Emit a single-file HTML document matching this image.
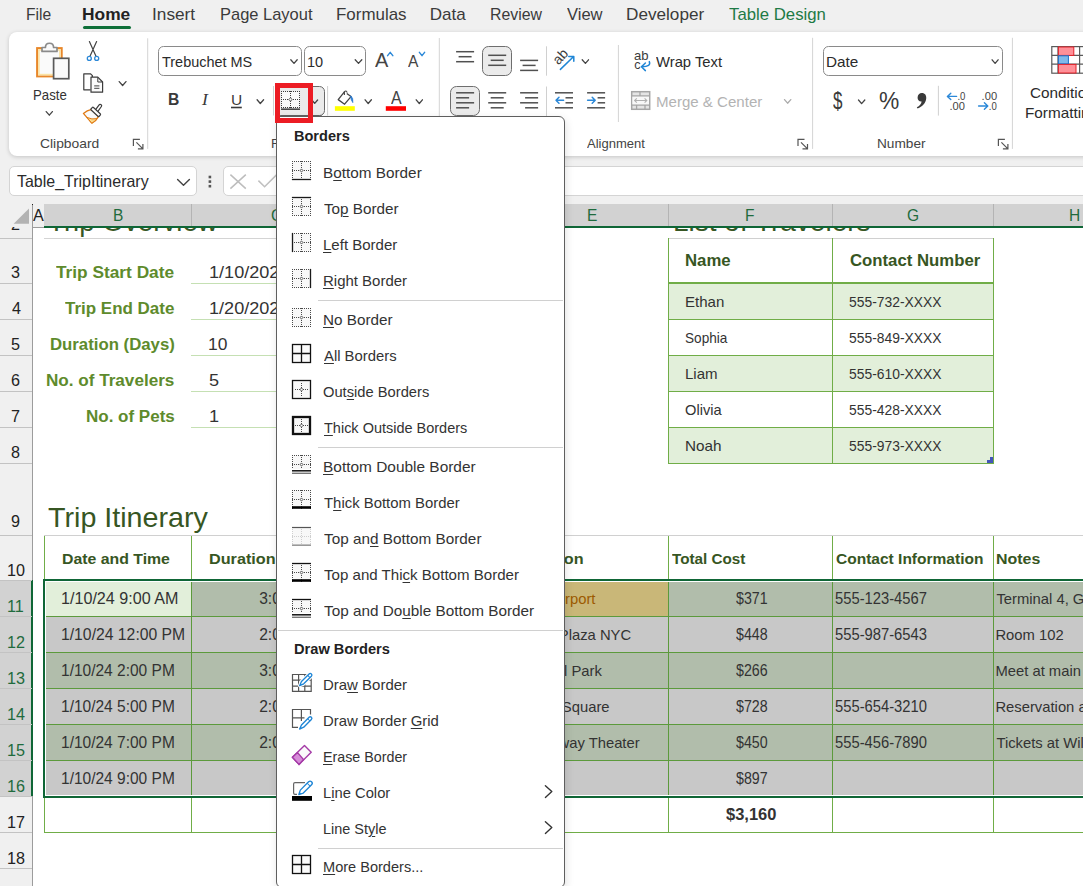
<!DOCTYPE html>
<html lang="en"><head><meta charset="utf-8"><title>Excel - Borders menu</title>
<style>
html,body{margin:0;padding:0}
body{width:1083px;height:886px;overflow:hidden;background:#f0f0f0;position:relative;font-family:"Liberation Sans",sans-serif}
#root{position:absolute;left:0;top:0;width:1083px;height:886px;overflow:hidden;background:#f0f0f0}
.t{position:absolute;white-space:pre;line-height:60px;height:60px;transform-origin:0 0;font-family:"Liberation Sans",sans-serif}
.t u{text-decoration-thickness:1px;text-underline-offset:2px}
.ov{position:absolute;left:0;top:0;overflow:visible;pointer-events:none}
.layer{position:absolute;left:0;top:0;width:1083px;height:886px}
</style></head><body><div id="root">
<!-- tabs + ribbon -->
<div class="layer">
<div style="position:absolute;left:83px;top:26px;width:48px;height:3px;border-radius:2px;background:#0f7039"></div>
<div style="position:absolute;left:9px;top:32px;width:1100px;height:124px;background:#fff;border-radius:8px;box-shadow:0 1px 4px rgba(0,0,0,.18)"></div>
<svg class="ov" width="1083" height="886" viewBox="0 0 1083 886"><path d="M147.7 38.3 V148.9" stroke="#d4d4d4" stroke-width="1"/><path d="M439.3 38 V148.9" stroke="#d4d4d4" stroke-width="1"/><path d="M618.4 45 V122" stroke="#d4d4d4" stroke-width="1"/><path d="M812.6 37.8 V148.9" stroke="#d4d4d4" stroke-width="1"/><path d="M1012.4 37.8 V148.9" stroke="#d4d4d4" stroke-width="1"/><path d="M273.5 86 V115.5" stroke="#d0d0d0" stroke-width="1"/><path d="M327.6 86 V115.5" stroke="#d0d0d0" stroke-width="1"/><path d="M546.5 46.3 V75.7" stroke="#d0d0d0" stroke-width="1"/><path d="M546.5 86.5 V116" stroke="#d0d0d0" stroke-width="1"/><path d="M938.4 85.8 V115.6" stroke="#d0d0d0" stroke-width="1"/><rect x="37.1" y="48.1" width="24.6" height="28.3" fill="#fafafa" stroke="#e8872a" stroke-width="2"/><rect x="38.9" y="49.9" width="21" height="24.7" fill="#fafafa" stroke="#fbe3a4" stroke-width="1.6"/><path d="M42 51.4 V47.5 H45.4 C45.4 41.8 53.6 41.8 53.6 47.5 H57 V51.4 Z" fill="#fafafa" stroke="#8a8a8a" stroke-width="1.7" stroke-linejoin="round"/><rect x="53.6" y="58.3" width="15.2" height="20.4" fill="#fafafa" stroke="#595959" stroke-width="1.7"/><path d="M46.2 111.6 L49.3 115.2 L52.4 111.6" fill="none" stroke="#444" stroke-width="1.3" stroke-linecap="round" stroke-linejoin="round"/><path d="M89.4 41.6 L96 56.2 M96.6 41.6 L90 56.2" stroke="#444" stroke-width="1.2" fill="none" stroke-linecap="round"/><circle cx="89.3" cy="58.4" r="2" fill="#fff" stroke="#2b88d8" stroke-width="1.3"/><circle cx="96.7" cy="58.4" r="2" fill="#fff" stroke="#2b88d8" stroke-width="1.3"/><path d="M90.6 89.8 H83.8 V73.8 H90.6 L92.4 75.6 V77" fill="none" stroke="#3c3c3c" stroke-width="1.2" stroke-linejoin="round"/><path d="M91 77.2 H97.8 L102.6 82 V92.2 H91 Z" fill="#fafafa" stroke="#3c3c3c" stroke-width="1.2" stroke-linejoin="round"/><path d="M97.8 77.4 V82 H102.4" fill="none" stroke="#3c3c3c" stroke-width="1"/><path d="M94.2 85.9 H99.4 M94.2 88.4 H99.4" stroke="#666" stroke-width="1.1"/><path d="M119.2 81.6 L122.6 85.5 L126.0 81.6" fill="none" stroke="#444" stroke-width="1.3" stroke-linecap="round" stroke-linejoin="round"/><path d="M91.6 109.4 Q87 110.4 83.4 113.4 L91.8 123.2 Q96.2 121 98.4 116.6 Z" fill="#fafafa" stroke="#e07b16" stroke-width="1.3" stroke-linejoin="round"/><path d="M86.8 117.4 L91.8 123.2 Q95.2 121.4 97 118.6 Q92 119.8 86.8 117.4 Z" fill="#fbd98a" stroke="#e07b16" stroke-width="1" stroke-linejoin="round"/><rect x="-4.2" y="-1.4" width="8.4" height="2.8" rx="1.2" transform="translate(98.5 108.1) rotate(-54)" fill="#fff" stroke="#3c3c3c" stroke-width="1.2"/><rect x="-5.5" y="-1.7" width="11" height="3.4" rx="0.9" transform="translate(95.7 111.9) rotate(43)" fill="#fff" stroke="#3c3c3c" stroke-width="1.2"/><path d="M133.4 145.9 V139.4 H139.9" fill="none" stroke="#555" stroke-width="1.2"/><path d="M136.4 142.4 L142.70000000000002 148.70000000000002 M142.9 143.9 V148.9 H137.9" fill="none" stroke="#555" stroke-width="1.2"/><rect x="158.5" y="46.5" width="143" height="29" rx="5" fill="#fff" stroke="#8a8a8a" stroke-width="1"/><path d="M290.8 59.8 L294.0 63.4 L297.2 59.8" fill="none" stroke="#444" stroke-width="1.3" stroke-linecap="round" stroke-linejoin="round"/><rect x="304.5" y="46.5" width="61" height="29" rx="5" fill="#fff" stroke="#8a8a8a" stroke-width="1"/><path d="M355.2 59.8 L358.5 63.4 L361.8 59.8" fill="none" stroke="#444" stroke-width="1.3" stroke-linecap="round" stroke-linejoin="round"/><path d="M387.6 55.6 L390.2 52.4 L392.8 55.6" fill="none" stroke="#2b88d8" stroke-width="1.5" stroke-linecap="round" stroke-linejoin="round"/><path d="M419.4 52.4 L422.0 55.6 L424.6 52.4" fill="none" stroke="#2b88d8" stroke-width="1.5" stroke-linecap="round" stroke-linejoin="round"/><path d="M231 107.5 H241.8" stroke="#3a3a3a" stroke-width="1.6"/><path d="M257.1 99.8 L260.3 103.5 L263.6 99.8" fill="none" stroke="#444" stroke-width="1.3" stroke-linecap="round" stroke-linejoin="round"/><rect x="275.5" y="86.5" width="49" height="29" rx="5" fill="#ebebeb" stroke="#6a6a6a" stroke-width="1"/><path d="M276 116.3 H322" stroke="#5a5a5a" stroke-width="1.6"/><rect x="281.5" y="91.5" width="18" height="16" fill="#f9f9f9"/><path d="M281 91.5 H300 M281 99.5 H300 M281 107.5 H300" stroke="#3c3c3c" stroke-width="1" stroke-dasharray="1 1" fill="none" shape-rendering="crispEdges"/><path d="M281.5 91 V108 M290.5 91 V108 M299.5 91 V108" stroke="#3c3c3c" stroke-width="1" stroke-dasharray="1 1" fill="none" shape-rendering="crispEdges"/><rect x="289.3" y="98.3" width="2.4" height="2.4" fill="#fff" stroke="#3c3c3c" stroke-width="0.8" transform="rotate(45 290.5 99.5)"/><path d="M281 109.2 H300" stroke="#4a4a4a" stroke-width="1.6"/><path d="M311.8 100.0 L314.7 103.4 L317.6 100.0" fill="none" stroke="#444" stroke-width="1.3" stroke-linecap="round" stroke-linejoin="round"/><path d="M344.6 91.6 L338.2 99.6 L344.6 104.2 L351 96.6 L346.8 93.4" fill="#fff" stroke="#444" stroke-width="1.3" stroke-linejoin="round"/><path d="M344.4 95 V91.8 Q346.2 89.8 347.2 92.6" fill="none" stroke="#444" stroke-width="1.1"/><path d="M350.6 95.8 Q353.6 98 352.8 102.6 Q350.8 100 350.6 95.8 Z" fill="#2b7cd3" stroke="#2b7cd3" stroke-width="0.8"/><rect x="334.9" y="106.2" width="19.9" height="4.6" fill="#ffff00"/><path d="M365.1 99.8 L368.2 103.5 L371.4 99.8" fill="none" stroke="#444" stroke-width="1.3" stroke-linecap="round" stroke-linejoin="round"/><rect x="385.8" y="106.2" width="20.2" height="4.6" fill="#ff0000"/><path d="M416.2 99.8 L419.3 103.5 L422.4 99.8" fill="none" stroke="#444" stroke-width="1.3" stroke-linecap="round" stroke-linejoin="round"/><rect x="482.5" y="46.5" width="29" height="29" rx="6" fill="#ebebeb" stroke="#6e6e6e"/><rect x="450.5" y="86.5" width="29" height="29" rx="6" fill="#ebebeb" stroke="#6e6e6e"/><path d="M456.1 51.7 H474.1" stroke="#505050" stroke-width="1.5" fill="none"/><path d="M458.6 56.7 H471.6" stroke="#505050" stroke-width="1.5" fill="none"/><path d="M456.1 61.7 H474.1" stroke="#505050" stroke-width="1.5" fill="none"/><path d="M488.2 55.3 H506.2" stroke="#505050" stroke-width="1.5" fill="none"/><path d="M490.7 60.3 H503.7" stroke="#505050" stroke-width="1.5" fill="none"/><path d="M488.2 65.3 H506.2" stroke="#505050" stroke-width="1.5" fill="none"/><path d="M520.1 60.4 H538.1" stroke="#505050" stroke-width="1.5" fill="none"/><path d="M522.6 65.4 H535.6" stroke="#505050" stroke-width="1.5" fill="none"/><path d="M520.1 70.4 H538.1" stroke="#505050" stroke-width="1.5" fill="none"/><path d="M456.1 92.8 H474.1" stroke="#505050" stroke-width="1.5" fill="none"/><path d="M456.1 97.8 H469.1" stroke="#505050" stroke-width="1.5" fill="none"/><path d="M456.1 102.8 H474.1" stroke="#505050" stroke-width="1.5" fill="none"/><path d="M456.1 107.8 H469.1" stroke="#505050" stroke-width="1.5" fill="none"/><path d="M488.2 92.8 H506.2" stroke="#505050" stroke-width="1.5" fill="none"/><path d="M490.7 97.8 H503.7" stroke="#505050" stroke-width="1.5" fill="none"/><path d="M488.2 102.8 H506.2" stroke="#505050" stroke-width="1.5" fill="none"/><path d="M490.7 107.8 H503.7" stroke="#505050" stroke-width="1.5" fill="none"/><path d="M520.1 92.8 H538.1" stroke="#505050" stroke-width="1.5" fill="none"/><path d="M525.1 97.8 H538.1" stroke="#505050" stroke-width="1.5" fill="none"/><path d="M520.1 102.8 H538.1" stroke="#505050" stroke-width="1.5" fill="none"/><path d="M525.1 107.8 H538.1" stroke="#505050" stroke-width="1.5" fill="none"/><path d="M555.0 92.8 H573.0" stroke="#505050" stroke-width="1.5" fill="none"/><path d="M565.5 97.8 H573.0" stroke="#505050" stroke-width="1.5" fill="none"/><path d="M565.5 102.8 H573.0" stroke="#505050" stroke-width="1.5" fill="none"/><path d="M555.0 107.8 H573.0" stroke="#505050" stroke-width="1.5" fill="none"/><path d="M587.1 92.8 H605.1" stroke="#505050" stroke-width="1.5" fill="none"/><path d="M597.6 97.8 H605.1" stroke="#505050" stroke-width="1.5" fill="none"/><path d="M597.6 102.8 H605.1" stroke="#505050" stroke-width="1.5" fill="none"/><path d="M587.1 107.8 H605.1" stroke="#505050" stroke-width="1.5" fill="none"/><path d="M563.6 100.3 H556 M559 97.3 L556 100.3 L559 103.3" fill="none" stroke="#2b88d8" stroke-width="1.5" stroke-linecap="round" stroke-linejoin="round"/><path d="M587.6 100.3 H595.2 M592.2 97.3 L595.2 100.3 L592.2 103.3" fill="none" stroke="#2b88d8" stroke-width="1.5" stroke-linecap="round" stroke-linejoin="round"/><text x="0" y="0" transform="translate(558.4 65.4) rotate(-47)" font-family="Liberation Sans, sans-serif" font-size="14" fill="#3c3c3c">ab</text><path d="M560.4 69.4 L573.4 56.7 M568.8 56.4 H573.8 V61.2" fill="none" stroke="#1f86d6" stroke-width="1.5" stroke-linecap="round" stroke-linejoin="round"/><path d="M582.2 59.8 L585.4 63.4 L588.5 59.8" fill="none" stroke="#444" stroke-width="1.3" stroke-linecap="round" stroke-linejoin="round"/><text x="634" y="60.3" font-family="Liberation Sans, sans-serif" font-size="12.6" fill="#3c3c3c" textLength="14.6" lengthAdjust="spacingAndGlyphs">ab</text><text x="634.2" y="69.4" font-family="Liberation Sans, sans-serif" font-size="12.6" fill="#3c3c3c">c</text><path d="M649.3 61.6 Q651.4 66.6 642 66.8 M645.4 63 L641.4 66.8 L645.4 70.6" fill="none" stroke="#1f86d6" stroke-width="1.5" stroke-linecap="round" stroke-linejoin="round"/><rect x="631.7" y="91.7" width="18" height="17.6" fill="#e4e4e4" stroke="#a6a6a6" stroke-width="1.5"/><rect x="632.4" y="96.2" width="16.6" height="8.6" fill="#f8f8f8"/><path d="M631.7 95.8 H649.7 M631.7 105.2 H649.7 M640 91.7 V95.8 M636.6 105.2 V109.3 M645 105.2 V109.3" stroke="#a6a6a6" stroke-width="1.3" fill="none"/><path d="M634.6 100.5 H646.8 M636.8 98.3 L634.6 100.5 L636.8 102.7 M644.6 98.3 L646.8 100.5 L644.6 102.7" stroke="#b0b0b0" stroke-width="1.1" fill="none"/><path d="M784.5 99.6 L787.6 103.2 L790.8 99.6" fill="none" stroke="#aaa" stroke-width="1.3" stroke-linecap="round" stroke-linejoin="round"/><path d="M798 145.9 V139.4 H804.5" fill="none" stroke="#555" stroke-width="1.2"/><path d="M801 142.4 L807.3 148.70000000000002 M807.5 143.9 V148.9 H802.5" fill="none" stroke="#555" stroke-width="1.2"/><rect x="823.5" y="46.5" width="179" height="29" rx="5" fill="#fff" stroke="#8a8a8a" stroke-width="1"/><path d="M992.1 59.8 L995.1 63.4 L998.1 59.8" fill="none" stroke="#444" stroke-width="1.3" stroke-linecap="round" stroke-linejoin="round"/><path d="M858.5 100.0 L861.6 103.6 L864.8 100.0" fill="none" stroke="#444" stroke-width="1.3" stroke-linecap="round" stroke-linejoin="round"/><path d="M921.8 93 C925 93 926.6 95.4 926.2 98.8 C925.8 103 922.4 106.8 917.6 108.6 L916.8 107.2 C919.6 105.8 921.4 103.8 921.6 101.4 C919 101.6 917.4 99.8 917.6 97.2 C917.8 94.8 919.4 93 921.8 93 Z" fill="#3a3a3a"/><text x="957.4" y="99.8" font-family="Liberation Sans, sans-serif" font-size="10.5" fill="#444" textLength="8" lengthAdjust="spacingAndGlyphs">.0</text><text x="949.4" y="109.6" font-family="Liberation Sans, sans-serif" font-size="10.5" fill="#444" textLength="15.5" lengthAdjust="spacingAndGlyphs">.00</text><path d="M956.6 96.4 H947.6 M950.8 93.2 L947.4 96.4 L950.8 99.6" fill="none" stroke="#2b88d8" stroke-width="1.4" stroke-linecap="round" stroke-linejoin="round"/><text x="981.6" y="99.8" font-family="Liberation Sans, sans-serif" font-size="10.5" fill="#444" textLength="15.5" lengthAdjust="spacingAndGlyphs">.00</text><text x="988.8" y="109.6" font-family="Liberation Sans, sans-serif" font-size="10.5" fill="#444" textLength="8" lengthAdjust="spacingAndGlyphs">.0</text><path d="M978.6 106 H987.6 M984.4 102.8 L987.8 106 L984.4 109.2" fill="none" stroke="#2b88d8" stroke-width="1.4" stroke-linecap="round" stroke-linejoin="round"/><path d="M998.4 145.9 V139.4 H1004.9" fill="none" stroke="#555" stroke-width="1.2"/><path d="M1001.4 142.4 L1007.6999999999999 148.70000000000002 M1007.9 143.9 V148.9 H1002.9" fill="none" stroke="#555" stroke-width="1.2"/><rect x="1051.8" y="46.6" width="40" height="26.6" fill="#fff" stroke="#5a5a5a" stroke-width="1.2"/><path d="M1051.8 55.4 H1092 M1051.8 64.2 H1092 M1058 46.6 V73.2 M1079.6 46.6 V73.2" stroke="#5a5a5a" stroke-width="1.2" fill="none"/><rect x="1058.4" y="47" width="15.4" height="8.4" fill="#ff9098" stroke="#e3222b" stroke-width="1"/><rect x="1058.4" y="55.8" width="10" height="8" fill="#80b9ea" stroke="#1c6fc9" stroke-width="1"/><rect x="1058.4" y="64.4" width="17.6" height="8.6" fill="#ff9098" stroke="#e3222b" stroke-width="1"/></svg>
<div class="t" style="left:25.68px;top:-15.00px;font-size:17px;font-weight:400;font-style:normal;color:#3b3b3b;transform:scale(0.9192,1.000);">File</div>
<div class="t" style="left:81.98px;top:-15.00px;font-size:17px;font-weight:700;font-style:normal;color:#222;transform:scale(1.0217,1.000);">Home</div>
<div class="t" style="left:151.99px;top:-15.00px;font-size:17px;font-weight:400;font-style:normal;color:#3b3b3b;transform:scale(1.0143,1.000);">Insert</div>
<div class="t" style="left:220.03px;top:-15.00px;font-size:17px;font-weight:400;font-style:normal;color:#3b3b3b;transform:scale(0.9684,1.000);">Page Layout</div>
<div class="t" style="left:336.30px;top:-15.00px;font-size:17px;font-weight:400;font-style:normal;color:#3b3b3b;transform:scale(0.9957,1.000);">Formulas</div>
<div class="t" style="left:429.70px;top:-15.00px;font-size:17px;font-weight:400;font-style:normal;color:#3b3b3b;transform:scale(1.0000,1.000);">Data</div>
<div class="t" style="left:490.07px;top:-15.00px;font-size:17px;font-weight:400;font-style:normal;color:#3b3b3b;transform:scale(0.9327,1.000);">Review</div>
<div class="t" style="left:567.30px;top:-15.00px;font-size:17px;font-weight:400;font-style:normal;color:#3b3b3b;transform:scale(0.9730,1.000);">View</div>
<div class="t" style="left:626.29px;top:-15.00px;font-size:17px;font-weight:400;font-style:normal;color:#3b3b3b;transform:scale(1.0092,1.000);">Developer</div>
<div class="t" style="left:728.70px;top:-15.00px;font-size:17px;font-weight:400;font-style:normal;color:#1e7a45;transform:scale(0.9856,1.000);">Table Design</div>
<div class="t" style="left:32.69px;top:65.00px;font-size:14.5px;font-weight:400;font-style:normal;color:#333;transform:scale(0.9111,1.000);">Paste</div>
<div class="t" style="left:40.36px;top:114.00px;font-size:13.3px;font-weight:400;font-style:normal;color:#444;transform:scale(1.0418,1.000);">Clipboard</div>
<div class="t" style="left:271.01px;top:114.00px;font-size:13.3px;font-weight:400;font-style:normal;color:#444;transform:scale(0.9900,1.000);">Font</div>
<div class="t" style="left:587.00px;top:114.00px;font-size:13.3px;font-weight:400;font-style:normal;color:#444;transform:scale(0.9797,1.000);">Alignment</div>
<div class="t" style="left:877.17px;top:114.00px;font-size:13.3px;font-weight:400;font-style:normal;color:#444;transform:scale(1.0283,1.000);">Number</div>
<div class="t" style="left:161.60px;top:31.80px;font-size:15px;font-weight:400;font-style:normal;color:#2b2b2b;transform:scale(0.9634,1.000);">Trebuchet MS</div>
<div class="t" style="left:307.33px;top:31.80px;font-size:15px;font-weight:400;font-style:normal;color:#2b2b2b;transform:scale(0.9667,1.000);">10</div>
<div class="t" style="left:656.40px;top:31.80px;font-size:15px;font-weight:400;font-style:normal;color:#2b2b2b;transform:scale(0.9866,1.000);">Wrap Text</div>
<div class="t" style="left:656.00px;top:71.70px;font-size:15px;font-weight:400;font-style:normal;color:#b3b3b3;transform:scale(1.0038,1.000);">Merge &amp; Center</div>
<div class="t" style="left:825.88px;top:31.80px;font-size:15px;font-weight:400;font-style:normal;color:#2b2b2b;transform:scale(1.0200,1.000);">Date</div>
<div class="t" style="left:167.65px;top:69.20px;font-size:16.5px;font-weight:700;font-style:normal;color:#3a3a3a;transform:scale(0.9500,1.000);">B</div>
<div class="t" style="left:202.00px;top:69.20px;font-size:17.5px;font-weight:400;font-style:italic;color:#3a3a3a;font-family:'Liberation Serif', serif;transform:scale(1.0000,1.000);">I</div>
<div class="t" style="left:230.90px;top:69.60px;font-size:15.5px;font-weight:400;font-style:normal;color:#3a3a3a;transform:scale(1.0000,1.000);">U</div>
<div class="t" style="left:374.50px;top:29.80px;font-size:21px;font-weight:400;font-style:normal;color:#444;transform:scale(0.9500,1.000);">A</div>
<div class="t" style="left:408.40px;top:30.80px;font-size:16.5px;font-weight:400;font-style:normal;color:#444;transform:scale(0.9455,1.000);">A</div>
<div class="t" style="left:390.70px;top:68.40px;font-size:17.5px;font-weight:400;font-style:normal;color:#444;transform:scale(0.9083,1.000);">A</div>
<div class="t" style="left:832.80px;top:70.70px;font-size:23px;font-weight:400;font-style:normal;color:#3a3a3a;transform:scale(0.7385,1.000);">$</div>
<div class="t" style="left:878.55px;top:71.20px;font-size:24px;font-weight:400;font-style:normal;color:#3a3a3a;transform:scale(0.9500,1.000);">%</div>
<div class="t" style="left:1029.58px;top:63.00px;font-size:15px;font-weight:400;font-style:normal;color:#2b2b2b;transform:scale(1.0200,1.000);">Conditional</div>
<div class="t" style="left:1025.18px;top:82.70px;font-size:15px;font-weight:400;font-style:normal;color:#2b2b2b;transform:scale(1.0200,1.000);">Formatting</div>
</div>
<!-- formula bar -->
<div class="layer"><div style="position:absolute;left:9px;top:166px;width:186px;height:28px;background:#fff;border:1px solid #d4d4d4;border-radius:5px"></div><div style="position:absolute;left:223px;top:166px;width:900px;height:28px;background:#fff;border:1px solid #d4d4d4;border-radius:5px"></div><svg class="ov" width="1083" height="886" viewBox="0 0 1083 886"><path d="M177.6 179.4 L183.5 185.2 L189.4 179.4" fill="none" stroke="#444" stroke-width="1.4" stroke-linecap="round" stroke-linejoin="round"/><rect x="208.6" y="175.7" width="2.6" height="2.6" fill="#555"/><rect x="208.6" y="180.29999999999998" width="2.6" height="2.6" fill="#555"/><rect x="208.6" y="184.89999999999998" width="2.6" height="2.6" fill="#555"/><path d="M230.4 174.6 L245.8 188.6 M245.8 174.6 L230.4 188.6" stroke="#bdbdbd" stroke-width="1.5" fill="none"/><path d="M258.4 180.6 L264.6 186.8 L279 172.4" stroke="#c0c0c0" stroke-width="1.5" fill="none"/></svg>
<div class="t" style="left:16.60px;top:151.40px;font-size:16.5px;font-weight:400;font-style:normal;color:#2b2b2b;transform:scale(0.9676,1.000);">Table_TripItinerary</div>
</div>
<!-- sheet -->
<div class="layer"><div style="position:absolute;left:33px;top:228px;width:1050px;height:658px;background:#fff;"></div><div class="t" style="left:48.31px;top:191.90px;font-size:28px;font-weight:400;font-style:normal;color:#375623;transform:scale(0.9895,1.000);">Trip Overview</div>
<div class="t" style="left:672.50px;top:191.90px;font-size:28px;font-weight:400;font-style:normal;color:#375623;transform:scale(0.9995,1.000);">List of Travelers</div>
<div class="t" style="left:10.70px;top:194.20px;font-size:16.5px;font-weight:400;font-style:normal;color:#222;transform:scale(0.9800,1.000);">2</div><div style="position:absolute;left:0px;top:204px;width:32px;height:23px;background:#f0f0f0;"></div><div style="position:absolute;left:44px;top:204px;width:1039px;height:22px;background:#d2d2d2;"></div><div style="position:absolute;left:44px;top:226px;width:1039px;height:2px;background:#0f6636;"></div><div style="position:absolute;left:33px;top:227px;width:11px;height:1px;background:#9c9c9c;"></div><div style="position:absolute;left:191px;top:204px;width:1px;height:22px;background:#b4b4b4;"></div><div style="position:absolute;left:362px;top:204px;width:1px;height:22px;background:#b4b4b4;"></div><div style="position:absolute;left:517px;top:204px;width:1px;height:22px;background:#b4b4b4;"></div><div style="position:absolute;left:668px;top:204px;width:1px;height:22px;background:#b4b4b4;"></div><div style="position:absolute;left:832px;top:204px;width:1px;height:22px;background:#b4b4b4;"></div><div style="position:absolute;left:993px;top:204px;width:1px;height:22px;background:#b4b4b4;"></div><div style="position:absolute;left:32px;top:205px;width:1px;height:681px;background:#9c9c9c;"></div><div style="position:absolute;left:32px;top:204px;width:1px;height:1px;background:#222;"></div><svg class="ov" width="1083" height="886" viewBox="0 0 1083 886"><path d="M29 208.6 V223.8 H13.6 Z" fill="#b3b3b3"/></svg><div style="position:absolute;left:0px;top:580px;width:32px;height:216px;background:#d2d2d2;"></div><div style="position:absolute;left:31px;top:580px;width:2px;height:216px;background:#0f6636;"></div><div style="position:absolute;left:0px;top:238px;width:32px;height:1px;background:#c3c3c3;"></div><div style="position:absolute;left:0px;top:283px;width:32px;height:1px;background:#c3c3c3;"></div><div style="position:absolute;left:0px;top:319px;width:32px;height:1px;background:#c3c3c3;"></div><div style="position:absolute;left:0px;top:355px;width:32px;height:1px;background:#c3c3c3;"></div><div style="position:absolute;left:0px;top:391px;width:32px;height:1px;background:#c3c3c3;"></div><div style="position:absolute;left:0px;top:427px;width:32px;height:1px;background:#c3c3c3;"></div><div style="position:absolute;left:0px;top:463px;width:32px;height:1px;background:#c3c3c3;"></div><div style="position:absolute;left:0px;top:535px;width:32px;height:1px;background:#c3c3c3;"></div><div style="position:absolute;left:0px;top:580px;width:32px;height:1px;background:#c3c3c3;"></div><div style="position:absolute;left:0px;top:616px;width:32px;height:1px;background:#c3c3c3;"></div><div style="position:absolute;left:0px;top:652px;width:32px;height:1px;background:#c3c3c3;"></div><div style="position:absolute;left:0px;top:688px;width:32px;height:1px;background:#c3c3c3;"></div><div style="position:absolute;left:0px;top:724px;width:32px;height:1px;background:#c3c3c3;"></div><div style="position:absolute;left:0px;top:760px;width:32px;height:1px;background:#c3c3c3;"></div><div style="position:absolute;left:0px;top:796px;width:32px;height:1px;background:#c3c3c3;"></div><div style="position:absolute;left:0px;top:832px;width:32px;height:1px;background:#c3c3c3;"></div><div style="position:absolute;left:0px;top:868px;width:32px;height:1px;background:#c3c3c3;"></div><div style="position:absolute;left:44px;top:238px;width:318px;height:1px;background:#d4d4d4;"></div><div style="position:absolute;left:191px;top:283px;width:171px;height:1px;background:#c5e0b3;"></div><div style="position:absolute;left:191px;top:319px;width:171px;height:1px;background:#c5e0b3;"></div><div style="position:absolute;left:191px;top:355px;width:171px;height:1px;background:#c5e0b3;"></div><div style="position:absolute;left:191px;top:391px;width:171px;height:1px;background:#c5e0b3;"></div><div style="position:absolute;left:191px;top:427px;width:171px;height:1px;background:#c5e0b3;"></div><div style="position:absolute;left:668px;top:283px;width:325px;height:36px;background:#e2efda;"></div><div style="position:absolute;left:668px;top:355px;width:325px;height:36px;background:#e2efda;"></div><div style="position:absolute;left:668px;top:427px;width:325px;height:36px;background:#e2efda;"></div><div style="position:absolute;left:668px;top:238px;width:326px;height:1px;background:#d0d0d0;"></div><div style="position:absolute;left:668px;top:238px;width:1px;height:226px;background:#70ad47;"></div><div style="position:absolute;left:832px;top:238px;width:1px;height:226px;background:#70ad47;"></div><div style="position:absolute;left:993px;top:238px;width:1px;height:226px;background:#70ad47;"></div><div style="position:absolute;left:668px;top:282px;width:326px;height:2px;background:#70ad47;"></div><div style="position:absolute;left:668px;top:319px;width:326px;height:1px;background:#70ad47;"></div><div style="position:absolute;left:668px;top:355px;width:326px;height:1px;background:#70ad47;"></div><div style="position:absolute;left:668px;top:391px;width:326px;height:1px;background:#70ad47;"></div><div style="position:absolute;left:668px;top:427px;width:326px;height:1px;background:#70ad47;"></div><div style="position:absolute;left:668px;top:463px;width:326px;height:1px;background:#70ad47;"></div><svg class="ov" width="1083" height="886" viewBox="0 0 1083 886"><path d="M990 457 H993 V463 H987 V460 H990 Z" fill="#4456b8"/></svg><div style="position:absolute;left:44px;top:535px;width:1039px;height:1px;background:#d0d0d0;"></div><div style="position:absolute;left:44px;top:580px;width:1039px;height:36px;background:#b1bdab;"></div><div style="position:absolute;left:44px;top:616px;width:1039px;height:36px;background:#c8c8c8;"></div><div style="position:absolute;left:44px;top:652px;width:1039px;height:36px;background:#b1bdab;"></div><div style="position:absolute;left:44px;top:688px;width:1039px;height:36px;background:#c8c8c8;"></div><div style="position:absolute;left:44px;top:724px;width:1039px;height:36px;background:#b1bdab;"></div><div style="position:absolute;left:44px;top:760px;width:1039px;height:36px;background:#c8c8c8;"></div><div style="position:absolute;left:44px;top:580px;width:147px;height:36px;background:#e2efda;"></div><div style="position:absolute;left:517px;top:580px;width:151px;height:36px;background:#c9b778;"></div><div style="position:absolute;left:44px;top:616px;width:1039px;height:1px;background:#5c9a3c;"></div><div style="position:absolute;left:44px;top:652px;width:1039px;height:1px;background:#5c9a3c;"></div><div style="position:absolute;left:44px;top:688px;width:1039px;height:1px;background:#5c9a3c;"></div><div style="position:absolute;left:44px;top:724px;width:1039px;height:1px;background:#5c9a3c;"></div><div style="position:absolute;left:44px;top:760px;width:1039px;height:1px;background:#5c9a3c;"></div><div style="position:absolute;left:191px;top:536px;width:1px;height:44px;background:#70ad47;"></div><div style="position:absolute;left:191px;top:580px;width:1px;height:216px;background:#5c9a3c;"></div><div style="position:absolute;left:191px;top:796px;width:1px;height:36px;background:#70ad47;"></div><div style="position:absolute;left:362px;top:536px;width:1px;height:44px;background:#70ad47;"></div><div style="position:absolute;left:362px;top:580px;width:1px;height:216px;background:#5c9a3c;"></div><div style="position:absolute;left:362px;top:796px;width:1px;height:36px;background:#70ad47;"></div><div style="position:absolute;left:517px;top:536px;width:1px;height:44px;background:#70ad47;"></div><div style="position:absolute;left:517px;top:580px;width:1px;height:216px;background:#5c9a3c;"></div><div style="position:absolute;left:517px;top:796px;width:1px;height:36px;background:#70ad47;"></div><div style="position:absolute;left:668px;top:536px;width:1px;height:44px;background:#70ad47;"></div><div style="position:absolute;left:668px;top:580px;width:1px;height:216px;background:#5c9a3c;"></div><div style="position:absolute;left:668px;top:796px;width:1px;height:36px;background:#70ad47;"></div><div style="position:absolute;left:832px;top:536px;width:1px;height:44px;background:#70ad47;"></div><div style="position:absolute;left:832px;top:580px;width:1px;height:216px;background:#5c9a3c;"></div><div style="position:absolute;left:832px;top:796px;width:1px;height:36px;background:#70ad47;"></div><div style="position:absolute;left:993px;top:536px;width:1px;height:44px;background:#70ad47;"></div><div style="position:absolute;left:993px;top:580px;width:1px;height:216px;background:#5c9a3c;"></div><div style="position:absolute;left:993px;top:796px;width:1px;height:36px;background:#70ad47;"></div><div style="position:absolute;left:44px;top:536px;width:1px;height:44px;background:#70ad47;"></div><div style="position:absolute;left:44px;top:796px;width:1px;height:36px;background:#70ad47;"></div><div style="position:absolute;left:44px;top:832px;width:1039px;height:1px;background:#70ad47;"></div><div style="position:absolute;left:45px;top:581px;width:1038px;height:1px;background:#fff;"></div><div style="position:absolute;left:45px;top:581px;width:1px;height:215px;background:#fff;"></div><div style="position:absolute;left:45px;top:795px;width:1038px;height:1px;background:#fff;"></div><div style="position:absolute;left:43px;top:579px;width:1040px;height:2px;background:#0f6636;"></div><div style="position:absolute;left:43px;top:796px;width:1040px;height:2px;background:#0f6636;"></div><div style="position:absolute;left:43px;top:579px;width:2px;height:219px;background:#0f6636;"></div>
<div class="t" style="left:33.20px;top:185.50px;font-size:16px;font-weight:400;font-style:normal;color:#222;transform:scale(1.0091,1.000);">A</div>
<div class="t" style="left:112.72px;top:185.50px;font-size:16px;font-weight:400;font-style:normal;color:#1f6b3d;transform:scale(0.9700,1.000);">B</div>
<div class="t" style="left:270.68px;top:185.50px;font-size:16px;font-weight:400;font-style:normal;color:#1f6b3d;transform:scale(0.9700,1.000);">C</div>
<div class="t" style="left:433.68px;top:185.50px;font-size:16px;font-weight:400;font-style:normal;color:#1f6b3d;transform:scale(0.9700,1.000);">D</div>
<div class="t" style="left:587.26px;top:185.50px;font-size:16px;font-weight:400;font-style:normal;color:#1f6b3d;transform:scale(0.9700,1.000);">E</div>
<div class="t" style="left:745.20px;top:185.50px;font-size:16px;font-weight:400;font-style:normal;color:#1f6b3d;transform:scale(0.9700,1.000);">F</div>
<div class="t" style="left:907.13px;top:185.50px;font-size:16px;font-weight:400;font-style:normal;color:#1f6b3d;transform:scale(0.9700,1.000);">G</div>
<div class="t" style="left:1069.03px;top:185.50px;font-size:16px;font-weight:400;font-style:normal;color:#1f6b3d;transform:scale(0.9700,1.000);">H</div>
<div class="t" style="left:11.30px;top:242.00px;font-size:16.5px;font-weight:400;font-style:normal;color:#222;transform:scale(0.9800,1.000);">3</div>
<div class="t" style="left:11.79px;top:278.00px;font-size:16.5px;font-weight:400;font-style:normal;color:#222;transform:scale(0.9800,1.000);">4</div>
<div class="t" style="left:11.30px;top:314.00px;font-size:16.5px;font-weight:400;font-style:normal;color:#222;transform:scale(0.9800,1.000);">5</div>
<div class="t" style="left:11.30px;top:350.00px;font-size:16.5px;font-weight:400;font-style:normal;color:#222;transform:scale(0.9800,1.000);">6</div>
<div class="t" style="left:11.30px;top:386.00px;font-size:16.5px;font-weight:400;font-style:normal;color:#222;transform:scale(0.9800,1.000);">7</div>
<div class="t" style="left:11.30px;top:422.00px;font-size:16.5px;font-weight:400;font-style:normal;color:#222;transform:scale(0.9800,1.000);">8</div>
<div class="t" style="left:11.30px;top:491.20px;font-size:16.5px;font-weight:400;font-style:normal;color:#222;transform:scale(0.9800,1.000);">9</div>
<div class="t" style="left:6.89px;top:539.90px;font-size:16.5px;font-weight:400;font-style:normal;color:#222;transform:scale(0.9800,1.000);">10</div>
<div class="t" style="left:7.38px;top:575.90px;font-size:16.5px;font-weight:400;font-style:normal;color:#1f6b3d;transform:scale(0.9800,1.000);">11</div>
<div class="t" style="left:6.89px;top:611.90px;font-size:16.5px;font-weight:400;font-style:normal;color:#1f6b3d;transform:scale(0.9800,1.000);">12</div>
<div class="t" style="left:6.89px;top:647.90px;font-size:16.5px;font-weight:400;font-style:normal;color:#1f6b3d;transform:scale(0.9800,1.000);">13</div>
<div class="t" style="left:6.89px;top:683.90px;font-size:16.5px;font-weight:400;font-style:normal;color:#1f6b3d;transform:scale(0.9800,1.000);">14</div>
<div class="t" style="left:6.89px;top:719.90px;font-size:16.5px;font-weight:400;font-style:normal;color:#1f6b3d;transform:scale(0.9800,1.000);">15</div>
<div class="t" style="left:6.89px;top:755.90px;font-size:16.5px;font-weight:400;font-style:normal;color:#1f6b3d;transform:scale(0.9800,1.000);">16</div>
<div class="t" style="left:6.89px;top:791.90px;font-size:16.5px;font-weight:400;font-style:normal;color:#222;transform:scale(0.9800,1.000);">17</div>
<div class="t" style="left:6.89px;top:827.90px;font-size:16.5px;font-weight:400;font-style:normal;color:#222;transform:scale(0.9800,1.000);">18</div>
<div class="t" style="left:56.10px;top:242.80px;font-size:16px;font-weight:700;font-style:normal;color:#5e8b2c;transform:scale(1.0798,1.000);">Trip Start Date</div>
<div class="t" style="left:64.60px;top:278.80px;font-size:16px;font-weight:700;font-style:normal;color:#5e8b2c;transform:scale(1.0602,1.000);">Trip End Date</div>
<div class="t" style="left:50.15px;top:314.80px;font-size:16px;font-weight:700;font-style:normal;color:#5e8b2c;transform:scale(1.0479,1.000);">Duration (Days)</div>
<div class="t" style="left:45.53px;top:350.80px;font-size:16px;font-weight:700;font-style:normal;color:#5e8b2c;transform:scale(1.0689,1.000);">No. of Travelers</div>
<div class="t" style="left:85.64px;top:386.80px;font-size:16px;font-weight:700;font-style:normal;color:#5e8b2c;transform:scale(1.0622,1.000);">No. of Pets</div>
<div class="t" style="left:208.67px;top:242.80px;font-size:16px;font-weight:400;font-style:normal;color:#333;transform:scale(1.1300,1.000);">1/10/2024</div>
<div class="t" style="left:208.67px;top:278.80px;font-size:16px;font-weight:400;font-style:normal;color:#333;transform:scale(1.1300,1.000);">1/20/2024</div>
<div class="t" style="left:208.31px;top:314.80px;font-size:16px;font-weight:400;font-style:normal;color:#333;transform:scale(1.0875,1.000);">10</div>
<div class="t" style="left:208.67px;top:350.80px;font-size:16px;font-weight:400;font-style:normal;color:#333;transform:scale(1.1300,1.000);">5</div>
<div class="t" style="left:208.67px;top:386.80px;font-size:16px;font-weight:400;font-style:normal;color:#333;transform:scale(1.1300,1.000);">1</div>
<div class="t" style="left:685.45px;top:231.20px;font-size:16px;font-weight:700;font-style:normal;color:#375623;transform:scale(1.0476,1.000);">Name</div>
<div class="t" style="left:849.65px;top:231.20px;font-size:16px;font-weight:700;font-style:normal;color:#375623;transform:scale(1.0463,1.000);">Contact Number</div>
<div class="t" style="left:684.90px;top:272.00px;font-size:15px;font-weight:400;font-style:normal;color:#333;transform:scale(1.0027,1.000);">Ethan</div>
<div class="t" style="left:848.78px;top:272.00px;font-size:15px;font-weight:400;font-style:normal;color:#333;transform:scale(0.9242,1.000);">555-732-XXXX</div>
<div class="t" style="left:684.99px;top:308.00px;font-size:15px;font-weight:400;font-style:normal;color:#333;transform:scale(0.9065,1.000);">Sophia</div>
<div class="t" style="left:848.78px;top:308.00px;font-size:15px;font-weight:400;font-style:normal;color:#333;transform:scale(0.9242,1.000);">555-849-XXXX</div>
<div class="t" style="left:684.90px;top:344.00px;font-size:15px;font-weight:400;font-style:normal;color:#333;transform:scale(1.0032,1.000);">Liam</div>
<div class="t" style="left:848.78px;top:344.00px;font-size:15px;font-weight:400;font-style:normal;color:#333;transform:scale(0.9242,1.000);">555-610-XXXX</div>
<div class="t" style="left:684.92px;top:380.00px;font-size:15px;font-weight:400;font-style:normal;color:#333;transform:scale(0.9757,1.000);">Olivia</div>
<div class="t" style="left:848.78px;top:380.00px;font-size:15px;font-weight:400;font-style:normal;color:#333;transform:scale(0.9242,1.000);">555-428-XXXX</div>
<div class="t" style="left:684.88px;top:416.00px;font-size:15px;font-weight:400;font-style:normal;color:#333;transform:scale(1.0176,1.000);">Noah</div>
<div class="t" style="left:848.78px;top:416.00px;font-size:15px;font-weight:400;font-style:normal;color:#333;transform:scale(0.9242,1.000);">555-973-XXXX</div>
<div class="t" style="left:48.28px;top:487.90px;font-size:28px;font-weight:400;font-style:normal;color:#375623;transform:scale(1.0245,1.000);">Trip Itinerary</div>
<div class="t" style="left:61.87px;top:528.60px;font-size:15.3px;font-weight:700;font-style:normal;color:#375623;transform:scale(1.0350,1.000);">Date and Time</div>
<div class="t" style="left:208.74px;top:528.60px;font-size:15.3px;font-weight:700;font-style:normal;color:#375623;transform:scale(1.0600,1.000);">Duration</div>
<div class="t" style="left:375.00px;top:528.60px;font-size:15.3px;font-weight:700;font-style:normal;color:#375623;transform:scale(1.0600,1.000);">Activity</div>
<div class="t" style="left:516.22px;top:528.60px;font-size:15.3px;font-weight:700;font-style:normal;color:#375623;transform:scale(1.0600,1.000);">Location</div>
<div class="t" style="left:672.20px;top:528.60px;font-size:15.3px;font-weight:700;font-style:normal;color:#375623;transform:scale(0.9959,1.000);">Total Cost</div>
<div class="t" style="left:835.89px;top:528.60px;font-size:15.3px;font-weight:700;font-style:normal;color:#375623;transform:scale(1.0146,1.000);">Contact Information</div>
<div class="t" style="left:995.86px;top:528.60px;font-size:15.3px;font-weight:700;font-style:normal;color:#375623;transform:scale(1.0439,1.000);">Notes</div>
<div class="t" style="left:60.77px;top:568.60px;font-size:15.6px;font-weight:400;font-style:normal;color:#333;transform:scale(1.0342,1.000);">1/10/24 9:00 AM</div>
<div class="t" style="left:259.20px;top:568.60px;font-size:15.6px;font-weight:400;font-style:normal;color:#333;transform:scale(1.0000,1.000);">3:00</div>
<div class="t" style="left:522.30px;top:568.60px;font-size:14.8px;font-weight:400;font-style:normal;color:#9c5a00;transform:scale(1.0000,1.000);">JFK Airport</div>
<div class="t" style="left:735.50px;top:568.60px;font-size:15.6px;font-weight:400;font-style:normal;color:#333;transform:scale(0.9118,1.000);">$371</div>
<div class="t" style="left:834.65px;top:568.60px;font-size:15.6px;font-weight:400;font-style:normal;color:#333;transform:scale(0.9469,1.000);">555-123-4567</div>
<div class="t" style="left:996.40px;top:568.60px;font-size:14.8px;font-weight:400;font-style:normal;color:#333;transform:scale(1.0000,1.000);">Terminal 4, Gate</div>
<div class="t" style="left:60.79px;top:604.60px;font-size:15.6px;font-weight:400;font-style:normal;color:#333;transform:scale(1.0091,1.000);">1/10/24 12:00 PM</div>
<div class="t" style="left:259.20px;top:604.60px;font-size:15.6px;font-weight:400;font-style:normal;color:#333;transform:scale(1.0000,1.000);">2:00</div>
<div class="t" style="left:529.20px;top:604.60px;font-size:14.8px;font-weight:400;font-style:normal;color:#333;transform:scale(1.0000,1.000);">The Plaza NYC</div>
<div class="t" style="left:735.50px;top:604.60px;font-size:15.6px;font-weight:400;font-style:normal;color:#333;transform:scale(0.9118,1.000);">$448</div>
<div class="t" style="left:834.65px;top:604.60px;font-size:15.6px;font-weight:400;font-style:normal;color:#333;transform:scale(0.9469,1.000);">555-987-6543</div>
<div class="t" style="left:995.40px;top:604.60px;font-size:14.8px;font-weight:400;font-style:normal;color:#333;transform:scale(1.0000,1.000);">Room 102</div>
<div class="t" style="left:60.81px;top:640.60px;font-size:15.6px;font-weight:400;font-style:normal;color:#333;transform:scale(0.9946,1.000);">1/10/24 2:00 PM</div>
<div class="t" style="left:259.20px;top:640.60px;font-size:15.6px;font-weight:400;font-style:normal;color:#333;transform:scale(1.0000,1.000);">3:00</div>
<div class="t" style="left:519.70px;top:640.60px;font-size:14.8px;font-weight:400;font-style:normal;color:#333;transform:scale(1.0000,1.000);">Central Park</div>
<div class="t" style="left:735.50px;top:640.60px;font-size:15.6px;font-weight:400;font-style:normal;color:#333;transform:scale(0.9118,1.000);">$266</div>
<div class="t" style="left:995.40px;top:640.60px;font-size:14.8px;font-weight:400;font-style:normal;color:#333;transform:scale(1.0000,1.000);">Meet at main gate</div>
<div class="t" style="left:60.81px;top:676.60px;font-size:15.6px;font-weight:400;font-style:normal;color:#333;transform:scale(0.9946,1.000);">1/10/24 5:00 PM</div>
<div class="t" style="left:259.20px;top:676.60px;font-size:15.6px;font-weight:400;font-style:normal;color:#333;transform:scale(1.0000,1.000);">2:00</div>
<div class="t" style="left:518.00px;top:676.60px;font-size:14.8px;font-weight:400;font-style:normal;color:#333;transform:scale(1.0000,1.000);">Times Square</div>
<div class="t" style="left:735.50px;top:676.60px;font-size:15.6px;font-weight:400;font-style:normal;color:#333;transform:scale(0.9118,1.000);">$728</div>
<div class="t" style="left:834.65px;top:676.60px;font-size:15.6px;font-weight:400;font-style:normal;color:#333;transform:scale(0.9469,1.000);">555-654-3210</div>
<div class="t" style="left:995.40px;top:676.60px;font-size:14.8px;font-weight:400;font-style:normal;color:#333;transform:scale(1.0000,1.000);">Reservation at 6</div>
<div class="t" style="left:60.81px;top:712.60px;font-size:15.6px;font-weight:400;font-style:normal;color:#333;transform:scale(0.9946,1.000);">1/10/24 7:00 PM</div>
<div class="t" style="left:259.20px;top:712.60px;font-size:15.6px;font-weight:400;font-style:normal;color:#333;transform:scale(1.0000,1.000);">2:00</div>
<div class="t" style="left:519.00px;top:712.60px;font-size:14.8px;font-weight:400;font-style:normal;color:#333;transform:scale(1.0000,1.000);">Broadway Theater</div>
<div class="t" style="left:735.50px;top:712.60px;font-size:15.6px;font-weight:400;font-style:normal;color:#333;transform:scale(0.9118,1.000);">$450</div>
<div class="t" style="left:834.65px;top:712.60px;font-size:15.6px;font-weight:400;font-style:normal;color:#333;transform:scale(0.9469,1.000);">555-456-7890</div>
<div class="t" style="left:996.40px;top:712.60px;font-size:14.8px;font-weight:400;font-style:normal;color:#333;transform:scale(1.0000,1.000);">Tickets at Will Call</div>
<div class="t" style="left:60.81px;top:748.60px;font-size:15.6px;font-weight:400;font-style:normal;color:#333;transform:scale(0.9946,1.000);">1/10/24 9:00 PM</div>
<div class="t" style="left:735.50px;top:748.60px;font-size:15.6px;font-weight:400;font-style:normal;color:#333;transform:scale(0.9118,1.000);">$897</div>
<div class="t" style="left:725.70px;top:784.60px;font-size:15.6px;font-weight:700;font-style:normal;color:#333;transform:scale(1.0574,1.000);">$3,160</div>
</div>
<!-- menu -->
<div class="layer"><div style="position:absolute;left:276px;top:116px;width:287px;height:770px;background:#fff;border:1px solid #5e5e5e;border-radius:0 6px 6px 6px;box-shadow:1px 3px 8px rgba(0,0,0,.12)"></div><div style="position:absolute;left:318px;top:300px;width:245px;height:1px;background:#d0d0d0"></div><div style="position:absolute;left:318px;top:447px;width:245px;height:1px;background:#d0d0d0"></div><div style="position:absolute;left:278px;top:630px;width:285px;height:1px;background:#d0d0d0"></div><div style="position:absolute;left:318px;top:848px;width:245px;height:1px;background:#d0d0d0"></div><svg class="ov" width="1083" height="886" viewBox="0 0 1083 886"><rect x="292.5" y="161.5" width="18.0" height="18.0" fill="#f8f8f8"/><path d="M292.0 161.5 H311.0 M292.5 161.0 V180.0 M310.5 161.0 V180.0 M292.0 170.5 H311.0 M301.5 161.0 V180.0 " stroke="#4a4a4a" stroke-width="1" stroke-dasharray="1 1" fill="none" shape-rendering="crispEdges"/><rect x="300.4" y="169.4" width="2.2" height="2.2" fill="#fff" stroke="#444" stroke-width="0.8" transform="rotate(45 301.5 170.5)"/><path d="M291.9 179.5 H311.1" stroke="#1a1a1a" stroke-width="1.3" fill="none"/><rect x="292.5" y="197.5" width="18.0" height="18.0" fill="#f8f8f8"/><path d="M292.0 215.5 H311.0 M292.5 197.0 V216.0 M310.5 197.0 V216.0 M292.0 206.5 H311.0 M301.5 197.0 V216.0 " stroke="#4a4a4a" stroke-width="1" stroke-dasharray="1 1" fill="none" shape-rendering="crispEdges"/><rect x="300.4" y="205.4" width="2.2" height="2.2" fill="#fff" stroke="#444" stroke-width="0.8" transform="rotate(45 301.5 206.5)"/><path d="M291.9 197.5 H311.1" stroke="#1a1a1a" stroke-width="1.3" fill="none"/><rect x="292.5" y="233.5" width="18.0" height="18.0" fill="#f8f8f8"/><path d="M292.0 233.5 H311.0 M292.0 251.5 H311.0 M310.5 233.0 V252.0 M292.0 242.5 H311.0 M301.5 233.0 V252.0 " stroke="#4a4a4a" stroke-width="1" stroke-dasharray="1 1" fill="none" shape-rendering="crispEdges"/><rect x="300.4" y="241.4" width="2.2" height="2.2" fill="#fff" stroke="#444" stroke-width="0.8" transform="rotate(45 301.5 242.5)"/><path d="M292.5 232.9 V252.1" stroke="#1a1a1a" stroke-width="1.3" fill="none"/><rect x="292.5" y="269.5" width="18.0" height="18.0" fill="#f8f8f8"/><path d="M292.0 269.5 H311.0 M292.0 287.5 H311.0 M292.5 269.0 V288.0 M292.0 278.5 H311.0 M301.5 269.0 V288.0 " stroke="#4a4a4a" stroke-width="1" stroke-dasharray="1 1" fill="none" shape-rendering="crispEdges"/><rect x="300.4" y="277.4" width="2.2" height="2.2" fill="#fff" stroke="#444" stroke-width="0.8" transform="rotate(45 301.5 278.5)"/><path d="M310.5 268.9 V288.1" stroke="#1a1a1a" stroke-width="1.3" fill="none"/><rect x="292.5" y="308.5" width="18.0" height="18.0" fill="#f8f8f8"/><path d="M292.0 308.5 H311.0 M292.0 326.5 H311.0 M292.5 308.0 V327.0 M310.5 308.0 V327.0 M292.0 317.5 H311.0 M301.5 308.0 V327.0 " stroke="#4a4a4a" stroke-width="1" stroke-dasharray="1 1" fill="none" shape-rendering="crispEdges"/><rect x="300.4" y="316.4" width="2.2" height="2.2" fill="#fff" stroke="#444" stroke-width="0.8" transform="rotate(45 301.5 317.5)"/><rect x="292.5" y="344.5" width="18.0" height="18.0" fill="#fafafa" stroke="#111" stroke-width="1.3"/><path d="M292.5 353.5 H310.5 M301.5 344.5 V362.5" stroke="#111" stroke-width="1.3" fill="none"/><rect x="292.5" y="380.5" width="18.0" height="18.0" fill="#f8f8f8" stroke="#111" stroke-width="1.3"/><path d="M295.0 389.5 H308.0 M301.5 383.0 V396.0 " stroke="#4a4a4a" stroke-width="1" stroke-dasharray="1 1" fill="none" shape-rendering="crispEdges"/><rect x="300.4" y="388.4" width="2.2" height="2.2" fill="#fff" stroke="#444" stroke-width="0.8" transform="rotate(45 301.5 389.5)"/><rect x="293.0" y="417.0" width="17.0" height="17.0" fill="#f8f8f8" stroke="#111" stroke-width="2.3"/><path d="M295.0 425.5 H308.0 M301.5 419.0 V432.0 " stroke="#4a4a4a" stroke-width="1" stroke-dasharray="1 1" fill="none" shape-rendering="crispEdges"/><rect x="300.4" y="424.4" width="2.2" height="2.2" fill="#fff" stroke="#444" stroke-width="0.8" transform="rotate(45 301.5 425.5)"/><rect x="292.5" y="455.5" width="18.0" height="18.0" fill="#f8f8f8"/><path d="M292.0 455.5 H311.0 M292.5 455.0 V474.0 M310.5 455.0 V474.0 M292.0 464.5 H311.0 M301.5 455.0 V474.0 " stroke="#4a4a4a" stroke-width="1" stroke-dasharray="1 1" fill="none" shape-rendering="crispEdges"/><rect x="300.4" y="463.4" width="2.2" height="2.2" fill="#fff" stroke="#444" stroke-width="0.8" transform="rotate(45 301.5 464.5)"/><rect x="292.0" y="469.0" width="19" height="5" fill="#fff"/><path d="M292.0 470.8 H311.0" stroke="#111" stroke-width="1.5" fill="none"/><path d="M292.0 473.3 H311.0" stroke="#777" stroke-width="1.4" fill="none"/><rect x="292.5" y="490.5" width="18.0" height="18.0" fill="#f8f8f8"/><path d="M292.0 490.5 H311.0 M292.5 490.0 V509.0 M310.5 490.0 V509.0 M292.0 499.5 H311.0 M301.5 490.0 V509.0 " stroke="#4a4a4a" stroke-width="1" stroke-dasharray="1 1" fill="none" shape-rendering="crispEdges"/><rect x="300.4" y="498.4" width="2.2" height="2.2" fill="#fff" stroke="#444" stroke-width="0.8" transform="rotate(45 301.5 499.5)"/><path d="M292.0 507.5 H311.0" stroke="#000" stroke-width="2.6" fill="none"/><rect x="292.5" y="527.5" width="18.0" height="18.0" fill="#f8f8f8"/><path d="M292.5 527.0 V546.0 M310.5 527.0 V546.0 M292.0 536.5 H311.0 M301.5 527.0 V546.0 " stroke="#cfcfcf" stroke-width="1" stroke-dasharray="1 1" fill="none" shape-rendering="crispEdges"/><path d="M292.0 527.5 H311.0" stroke="#555" stroke-width="1.2" fill="none"/><path d="M292.0 545.2 H311.0" stroke="#999" stroke-width="1.6" fill="none"/><rect x="292.5" y="563.5" width="18.0" height="18.0" fill="#f8f8f8"/><path d="M292.5 563.0 V582.0 M310.5 563.0 V582.0 M292.0 572.5 H311.0 M301.5 563.0 V582.0 " stroke="#4a4a4a" stroke-width="1" stroke-dasharray="1 1" fill="none" shape-rendering="crispEdges"/><rect x="300.4" y="571.4" width="2.2" height="2.2" fill="#fff" stroke="#444" stroke-width="0.8" transform="rotate(45 301.5 572.5)"/><path d="M292.0 563.5 H311.0" stroke="#111" stroke-width="1.3" fill="none"/><path d="M292.0 580.5 H311.0" stroke="#000" stroke-width="2.6" fill="none"/><rect x="292.5" y="599.5" width="18.0" height="18.0" fill="#f8f8f8"/><path d="M292.5 599.0 V618.0 M310.5 599.0 V618.0 M292.0 608.5 H311.0 M301.5 599.0 V618.0 " stroke="#4a4a4a" stroke-width="1" stroke-dasharray="1 1" fill="none" shape-rendering="crispEdges"/><rect x="300.4" y="607.4" width="2.2" height="2.2" fill="#fff" stroke="#444" stroke-width="0.8" transform="rotate(45 301.5 608.5)"/><path d="M292.0 599.5 H311.0" stroke="#111" stroke-width="1.3" fill="none"/><rect x="292.0" y="613.0" width="19" height="5" fill="#fff"/><path d="M292.0 614.8 H311.0" stroke="#111" stroke-width="1.5" fill="none"/><path d="M292.0 617.3 H311.0" stroke="#777" stroke-width="1.4" fill="none"/><path d="M292.5 674.5 H311.2 V691.3 H292.5 Z M298.6 674.5 V691.3 M304.8 674.5 V691.3 M292.5 680.2 H311.2 M292.5 686.2 H311.2" stroke="#555" stroke-width="1.2" fill="none"/><g transform="translate(305.50 679.80) rotate(45)"><path d="M-1.6 4.1000000000000005 V-6.700000000000001 A1.6 1.6 0 0 1 1.6 -6.700000000000001 V4.1000000000000005 L0 8.3 Z" fill="#fff" stroke="#fff" stroke-width="3.4" stroke-linejoin="round"/><path d="M-1.6 4.1000000000000005 V-6.700000000000001 A1.6 1.6 0 0 1 1.6 -6.700000000000001 V4.1000000000000005 L0 8.3 Z" fill="#fff" stroke="#1f86d6" stroke-width="1.35" stroke-linejoin="round"/><path d="M-1.6 -4.700000000000001 H1.6" stroke="#1f86d6" stroke-width="1"/><path d="M-0.8800000000000001 6.000000000000001 L0 8.3 L0.8800000000000001 6.000000000000001 Z" fill="#1f86d6"/></g><path d="M298 727.4 H292.5 V709.5 H310.5 V714.4 M292.5 717.9 H304.5 M301.4 709.5 V721" stroke="#555" stroke-width="1.2" fill="none"/><g transform="translate(305.50 723.20) rotate(45)"><path d="M-1.6 4.1000000000000005 V-6.700000000000001 A1.6 1.6 0 0 1 1.6 -6.700000000000001 V4.1000000000000005 L0 8.3 Z" fill="#fff" stroke="#fff" stroke-width="3.4" stroke-linejoin="round"/><path d="M-1.6 4.1000000000000005 V-6.700000000000001 A1.6 1.6 0 0 1 1.6 -6.700000000000001 V4.1000000000000005 L0 8.3 Z" fill="#fff" stroke="#1f86d6" stroke-width="1.35" stroke-linejoin="round"/><path d="M-1.6 -4.700000000000001 H1.6" stroke="#1f86d6" stroke-width="1"/><path d="M-0.8800000000000001 6.000000000000001 L0 8.3 L0.8800000000000001 6.000000000000001 Z" fill="#1f86d6"/></g><path d="M304.5 745.6 L311.2 752.3 L299 764.4 L292.4 757.2 Z" fill="#fafafa" stroke="#a43aa6" stroke-width="1.4" stroke-linejoin="round"/><path d="M292.4 757.2 L297.6 752.6 L303.6 759.6 L299 764.4 Z" fill="#d68bd8" stroke="#a43aa6" stroke-width="1.4" stroke-linejoin="round"/><path d="M305 782.6 H295 Q293.6 782.6 293.6 784 V793 Q293.6 794.4 295 794.4 H297" stroke="#666" stroke-width="1.2" fill="none"/><g transform="translate(305.20 788.20) rotate(45)"><path d="M-2.1 4.8 V-6.9 A2.1 2.1 0 0 1 2.1 -6.9 V4.8 L0 9.0 Z" fill="#fff" stroke="#fff" stroke-width="3.4" stroke-linejoin="round"/><path d="M-2.1 4.8 V-6.9 A2.1 2.1 0 0 1 2.1 -6.9 V4.8 L0 9.0 Z" fill="#fff" stroke="#1f86d6" stroke-width="1.35" stroke-linejoin="round"/><path d="M-2.1 -4.9 H2.1" stroke="#1f86d6" stroke-width="1"/><path d="M-1.1550000000000002 6.7 L0 9.0 L1.1550000000000002 6.7 Z" fill="#1f86d6"/></g><rect x="292" y="796" width="20" height="4.8" fill="#000"/><rect x="292.5" y="855.5" width="18.0" height="18.0" fill="#fafafa" stroke="#111" stroke-width="1.3"/><path d="M292.5 864.5 H310.5 M301.5 855.5 V873.5" stroke="#111" stroke-width="1.3" fill="none"/><path d="M545.4 785.8 L551.8 791.6 L545.4 797.4" fill="none" stroke="#333" stroke-width="1.4" stroke-linecap="round" stroke-linejoin="round"/><path d="M545.4 821.8 L551.8 827.6 L545.4 833.4" fill="none" stroke="#333" stroke-width="1.4" stroke-linecap="round" stroke-linejoin="round"/></svg>
<div class="t" style="left:293.90px;top:106.00px;font-size:14.5px;font-weight:700;font-style:normal;color:#222;transform:scale(1.0019,1.000);">Borders</div>
<div class="t" style="left:293.89px;top:619.00px;font-size:14.5px;font-weight:700;font-style:normal;color:#222;transform:scale(1.0085,1.000);">Draw Borders</div>
<div class="t" style="left:322.78px;top:143.00px;font-size:15px;font-weight:400;font-style:normal;color:#333;transform:scale(1.0208,1.000);">B<u>o</u>ttom Border</div>
<div class="t" style="left:323.80px;top:179.00px;font-size:15px;font-weight:400;font-style:normal;color:#333;transform:scale(1.0164,1.000);">To<u>p</u> Border</div>
<div class="t" style="left:322.80px;top:215.00px;font-size:15px;font-weight:400;font-style:normal;color:#333;transform:scale(1.0014,1.000);"><u>L</u>eft Border</div>
<div class="t" style="left:322.80px;top:251.00px;font-size:15px;font-weight:400;font-style:normal;color:#333;transform:scale(0.9976,1.000);"><u>R</u>ight Border</div>
<div class="t" style="left:322.78px;top:289.70px;font-size:15px;font-weight:400;font-style:normal;color:#333;transform:scale(1.0164,1.000);"><u>N</u>o Border</div>
<div class="t" style="left:323.80px;top:325.50px;font-size:15px;font-weight:400;font-style:normal;color:#333;transform:scale(0.9890,1.000);"><u>A</u>ll Borders</div>
<div class="t" style="left:322.82px;top:361.50px;font-size:15px;font-weight:400;font-style:normal;color:#333;transform:scale(0.9804,1.000);">Out<u>s</u>ide Borders</div>
<div class="t" style="left:323.80px;top:397.50px;font-size:15px;font-weight:400;font-style:normal;color:#333;transform:scale(0.9655,1.000);"><u>T</u>hick Outside Borders</div>
<div class="t" style="left:322.77px;top:436.80px;font-size:15px;font-weight:400;font-style:normal;color:#333;transform:scale(1.0286,1.000);"><u>B</u>ottom Double Border</div>
<div class="t" style="left:323.80px;top:472.50px;font-size:15px;font-weight:400;font-style:normal;color:#333;transform:scale(0.9927,1.000);">T<u>h</u>ick Bottom Border</div>
<div class="t" style="left:323.80px;top:508.70px;font-size:15px;font-weight:400;font-style:normal;color:#333;transform:scale(1.0208,1.000);">Top an<u>d</u> Bottom Border</div>
<div class="t" style="left:323.80px;top:544.70px;font-size:15px;font-weight:400;font-style:normal;color:#333;transform:scale(1.0052,1.000);">Top and Thi<u>c</u>k Bottom Border</div>
<div class="t" style="left:323.80px;top:580.70px;font-size:15px;font-weight:400;font-style:normal;color:#333;transform:scale(1.0204,1.000);">Top and Do<u>u</u>ble Bottom Border</div>
<div class="t" style="left:322.80px;top:655.00px;font-size:15px;font-weight:400;font-style:normal;color:#333;transform:scale(0.9976,1.000);">Dra<u>w</u> Border</div>
<div class="t" style="left:322.81px;top:691.00px;font-size:15px;font-weight:400;font-style:normal;color:#333;transform:scale(0.9930,1.000);">Draw Border <u>G</u>rid</div>
<div class="t" style="left:322.85px;top:727.00px;font-size:15px;font-weight:400;font-style:normal;color:#333;transform:scale(0.9517,1.000);"><u>E</u>rase Border</div>
<div class="t" style="left:322.82px;top:763.00px;font-size:15px;font-weight:400;font-style:normal;color:#333;transform:scale(0.9836,1.000);">L<u>i</u>ne Color</div>
<div class="t" style="left:322.84px;top:799.00px;font-size:15px;font-weight:400;font-style:normal;color:#333;transform:scale(0.9641,1.000);">Line St<u>y</u>le</div>
<div class="t" style="left:322.83px;top:837.40px;font-size:15px;font-weight:400;font-style:normal;color:#333;transform:scale(0.9703,1.000);"><u>M</u>ore Borders...</div>
</div>
<!-- highlight -->
<div style="position:absolute;left:275px;top:83px;width:28px;height:30px;border:5px solid #ec1c24"></div>
</div></body></html>
